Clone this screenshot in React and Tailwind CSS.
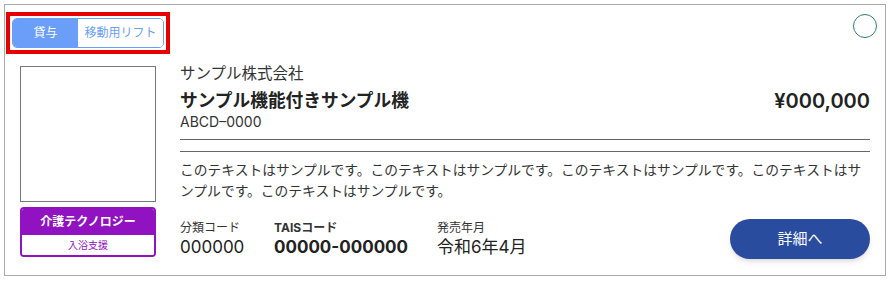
const jp = 'Inter, "Noto Sans CJK JP", "Noto Sans", sans-serif';

function Toggle() {
  return (
    <div className="ml-px mt-[7px] w-fit border-4 border-[#e60000] p-[2px]">
      <div className="flex h-[30px] w-[152px] overflow-hidden rounded-[5px] border border-[#6a9ef8] text-[12px]">
        <div className="flex w-[65px] items-center justify-center bg-[#6a9ef8] text-white">貸与</div>
        <div className="flex flex-1 items-center justify-center bg-white text-[#6a9ef8]">移動用リフト</div>
      </div>
    </div>
  )
}

function Spec({ label, value, bold }) {
  return (
    <div className="flex flex-col">
      <span className={`text-[12px] leading-[16px] text-[#333] ${bold ? 'font-bold' : ''}`}>{label}</span>
      <span className={`text-[17px] leading-[22px] text-[#222] ${bold ? 'font-bold' : ''}`}>{value}</span>
    </div>
  )
}

export default function App() {
  return (
    <div className="bg-white p-1" style={{ fontFamily: jp }}>
      <div className="flex h-[272px] w-[882px] flex-col border border-[#aaa] bg-white">
        {/* Header row: type toggle + favourite circle */}
        <div className="flex items-start justify-between">
          <Toggle />
          <div className="mr-[8px] mt-[9px] h-[24px] w-[24px] rounded-full border-[1.5px] border-[#2e7d74]" />
        </div>

        <div className="mt-[12px] flex gap-[24px] pl-[15px] pr-[15px]">
          {/* Image + category badge */}
          <div className="flex w-[136px] shrink-0 flex-col gap-[5px]">
            <div className="h-[136px] w-[136px] border border-[#777] bg-white" />
            <div className="overflow-hidden rounded-[4px] border-2 border-[#9012c0]">
              <div className="flex h-[26px] items-center justify-center bg-[#9012c0] text-[12px] font-bold text-white">
                介護テクノロジー
              </div>
              <div className="flex h-[20px] items-center justify-center bg-white text-[10px] text-[#9012c0]">
                入浴支援
              </div>
            </div>
          </div>

          {/* Product info */}
          <div className="flex min-w-0 flex-1 flex-col">
            <div className="flex items-start justify-between border-b border-[#666] pb-[8px]">
              <div className="flex flex-col">
                <span className="text-[15.5px] leading-[16px] text-[#333]">サンプル株式会社</span>
                <span className="mt-[7px] text-[17.7px] font-bold leading-[24px] text-[#222]">サンプル機能付きサンプル機</span>
                <span className="text-[14px] leading-[18px] text-[#333]">ABCD–0000</span>
              </div>
              <span className="mt-[21px] text-[20px] font-semibold leading-[28px] text-[#222]">¥000,000</span>
            </div>
            <div className="mt-[11px] border-t border-[#666] pt-[8px] text-[13.78px] leading-[21px] text-[#333]">
              このテキストはサンプルです。このテキストはサンプルです。このテキストはサンプルです。このテキストはサンプルです。このテキストはサンプルです。
            </div>
            <div className="mt-[17px] flex items-center">
              <div className="w-[94px]"><Spec label="分類コード" value="000000" /></div>
              <div className="w-[163px]"><Spec label="TAISコード" value="00000-000000" bold /></div>
              <Spec label="発売年月" value="令和6年4月" />
              <button className="ml-auto flex h-[40px] w-[140px] items-center justify-center rounded-full bg-[#2a4c9e] text-[15px] text-white shadow-md">
                詳細へ
              </button>
            </div>
          </div>
        </div>
      </div>
    </div>
  )
}
